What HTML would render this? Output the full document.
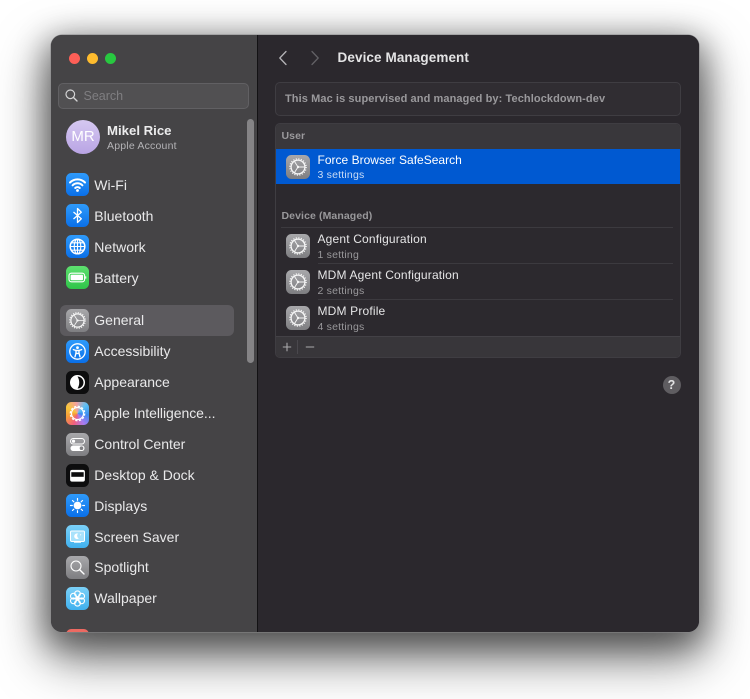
<!DOCTYPE html>
<html><head><meta charset="utf-8">
<style>
html,body{margin:0;padding:0;background:#fff;}
body{width:750px;height:699px;position:relative;overflow:hidden;font-family:"Liberation Sans",sans-serif;-webkit-font-smoothing:antialiased;}
#win{position:absolute;left:51px;top:35px;width:648px;height:597px;border-radius:11px;overflow:hidden;background:#2b282d;box-shadow:0 0 0 .5px #8a8a8c, 0 22px 50px 4px rgba(0,0,0,.55), 0 8px 30px 6px rgba(0,0,0,.35);}
#side{position:absolute;left:0;top:0;width:205.5px;height:597px;background:#454446;border-right:1px solid #131214;}
#main{position:absolute;left:206.5px;top:0;width:441.5px;height:597px;background:#2b282d;}
.a{position:absolute;white-space:nowrap;}
.dot{position:absolute;top:18px;width:11px;height:11px;border-radius:50%;}
.ic{position:absolute;left:15px;width:23px;height:23px;border-radius:5.5px;overflow:hidden;}
.ic svg{display:block;width:23px;height:23px;}
.lb{position:absolute;left:43.3px;font-size:14px;line-height:18px;color:#e9e9ea;white-space:nowrap;}
.blue{background:linear-gradient(#2f9bfb,#0a6fe8);}
.gray{background:linear-gradient(#a8a8ab,#7e7e81);}
.black{background:#0d0d0e;}
.sky{background:linear-gradient(#7bd0f7,#3fb0ee);}
.row-ic{position:absolute;left:10px;width:24px;height:24px;border-radius:5.5px;background:linear-gradient(#a8a8ab,#7e7e81);overflow:hidden;}
.t1{position:absolute;left:41.5px;font-size:12px;line-height:15px;color:#e6e6e7;letter-spacing:.17px;white-space:nowrap;}
.t2{position:absolute;left:41.5px;font-size:10.5px;line-height:13px;color:#99989b;letter-spacing:.2px;white-space:nowrap;}
.sep{position:absolute;left:41.5px;right:7px;height:1px;background:#3c3a3f;}
</style></head><body>
<svg width="0" height="0" style="position:absolute">
<symbol id="gear" viewBox="0 0 24 24">
<circle cx="12" cy="12" r="6.9" fill="none" stroke="#f6f6f6" stroke-width="1.3"/>
<circle cx="12" cy="12" r="8.2" fill="none" stroke="#f6f6f6" stroke-width="1.2" stroke-dasharray="1.1 1.48"/>
<path d="M8.6 6.6L12 12M8.6 17.4L12 12M18.4 12H12" stroke="#f6f6f6" stroke-width=".9" fill="none"/>
<circle cx="12" cy="12" r="1.2" fill="#f6f6f6"/>
</symbol>
</svg>
<div id="win">
 <div id="side">
  <div class="dot" style="left:18px;background:#fe5f57"></div>
  <div class="dot" style="left:36px;background:#febc2e"></div>
  <div class="dot" style="left:54px;background:#28c840"></div>

  <div class="a" style="left:7px;top:48px;width:189px;height:24px;border-radius:5px;background:#515052;border:.5px solid #616063;"></div>
  <svg class="a" style="left:14px;top:54px" width="13" height="13" viewBox="0 0 13 13"><circle cx="5.3" cy="5.3" r="4.3" fill="none" stroke="#d5d5d6" stroke-width="1.2"/><path d="M8.5 8.5L12 12" stroke="#d5d5d6" stroke-width="1.4" stroke-linecap="round"/></svg>
  <div class="a" style="left:32.5px;top:54px;font-size:12.5px;line-height:15px;color:#7f7e81;">Search</div>

  <div class="a" style="left:15px;top:85px;width:34px;height:34px;border-radius:50%;background:linear-gradient(#d5c8f1,#b9a4e4);color:#fff;font-size:15px;line-height:34px;text-align:center;">MR</div>
  <div class="a" style="left:56px;top:87px;font-size:13.2px;line-height:17px;font-weight:bold;color:#ececed">Mikel Rice</div>
  <div class="a" style="left:56px;top:105px;font-size:10.5px;line-height:13px;color:#b4b3b6;letter-spacing:.2px">Apple Account</div>

  <div class="a" style="left:196px;top:84px;width:7px;height:244px;border-radius:4px;background:#858486;"></div>

  <div class="a" style="left:9px;top:270px;width:174px;height:31px;border-radius:6px;background:#5c5a5e;"></div>

  <div class="ic blue" style="top:138px"><svg viewBox="0 0 23 23"><path d="M4 9.5C8.2 5.3 14.8 5.3 19 9.5M6.6 12.3C9.4 9.6 13.6 9.6 16.4 12.3M9.2 15C10.5 13.8 12.5 13.8 13.8 15" fill="none" stroke="#fff" stroke-width="2" stroke-linecap="round"/><circle cx="11.5" cy="17.5" r="1.4" fill="#fff"/></svg></div>
  <div class="lb" style="top:141px">Wi-Fi</div>

  <div class="ic blue" style="top:169px"><svg viewBox="0 0 23 23"><path d="M7.5 8L15.3 14.8L11.5 18.5V4.5L15.3 8.2L7.5 15" fill="none" stroke="#fff" stroke-width="1.3" stroke-linejoin="round"/></svg></div>
  <div class="lb" style="top:172px">Bluetooth</div>

  <div class="ic blue" style="top:200px"><svg viewBox="0 0 23 23"><g fill="none" stroke="#fff" stroke-width="1.1"><circle cx="11.5" cy="11.5" r="7.3" stroke-width="1.5"/><ellipse cx="11.5" cy="11.5" rx="3.3" ry="7.3"/><path d="M11.5 4.2V18.8M4.2 11.5H18.8M5.5 7.8H17.5M5.5 15.2H17.5"/></g></svg></div>
  <div class="lb" style="top:203px">Network</div>

  <div class="ic" style="top:231px;background:linear-gradient(#5ee06f,#2fc549)"><svg viewBox="0 0 23 23"><rect x="3" y="7.2" width="15.6" height="8.6" rx="2.4" fill="none" stroke="#fff" stroke-width="1.1"/><rect x="4.6" y="8.8" width="12.4" height="5.4" rx="1" fill="#fff"/><rect x="19.2" y="10.2" width="1.1" height="2.6" rx=".5" fill="#fff"/></svg></div>
  <div class="lb" style="top:234px">Battery</div>

  <div class="ic gray" style="top:273.5px"><svg viewBox="0 0 24 24"><use href="#gear"/></svg></div>
  <div class="lb" style="top:276px">General</div>

  <div class="ic blue" style="top:304.5px"><svg viewBox="0 0 23 23"><circle cx="11.5" cy="11.5" r="7.7" fill="none" stroke="#fff" stroke-width="1.3"/><circle cx="11.5" cy="7.6" r="1.4" fill="#fff"/><path d="M7.4 9.6L10 10.5V13L9 16.8M15.6 9.6L13 10.5V13L14 16.8M10 10.5H13M10.3 13.4H12.7" fill="none" stroke="#fff" stroke-width="1.4" stroke-linecap="round" stroke-linejoin="round"/></svg></div>
  <div class="lb" style="top:307px">Accessibility</div>

  <div class="ic black" style="top:335.5px"><svg viewBox="0 0 23 23"><circle cx="11.5" cy="11.5" r="7.5" fill="#fff"/><path d="M11.5 5.5A6 6 0 0 1 11.5 17.5C13.8 14 13.8 9 11.5 5.5Z" fill="#0d0d0e"/></svg></div>
  <div class="lb" style="top:338px">Appearance</div>

  <div class="ic" style="top:366.5px;background:conic-gradient(from 200deg,#f0607e,#f59a3a,#f7c63c,#f5a0a0,#5cc0f5,#3a8cf0,#a87cf0,#f0607e)"><svg viewBox="0 0 23 23"><circle cx="11.5" cy="11.5" r="6" fill="none" stroke="#fff" stroke-width="1.2"/><circle cx="11.5" cy="11.5" r="7.2" fill="none" stroke="#fff" stroke-width="1.3" stroke-dasharray="2.2 1.57"/></svg></div>
  <div class="lb" style="top:369px;letter-spacing:-.05px">Apple Intelligence...</div>

  <div class="ic gray" style="top:397.5px"><svg viewBox="0 0 23 23"><rect x="4.5" y="5.5" width="14" height="5.5" rx="2.75" fill="none" stroke="#fff" stroke-width="1"/><circle cx="7.5" cy="8.2" r="1.6" fill="#fff"/><rect x="4.5" y="12.5" width="14" height="5.5" rx="2.75" fill="#fff"/><circle cx="15.5" cy="15.2" r="1.8" fill="#828285"/></svg></div>
  <div class="lb" style="top:400px">Control Center</div>

  <div class="ic black" style="top:428.5px"><svg viewBox="0 0 23 23"><rect x="4.7" y="6.5" width="13.6" height="10.5" rx="1.4" fill="none" stroke="#fff" stroke-width="1.2"/><rect x="4.7" y="12.8" width="13.6" height="4.2" fill="#fff"/><rect x="4.7" y="6.5" width="13.6" height="1.7" fill="#fff"/></svg></div>
  <div class="lb" style="top:431px">Desktop &amp; Dock</div>

  <div class="ic blue" style="top:459px"><svg viewBox="0 0 23 23"><circle cx="11.5" cy="11.5" r="3.9" fill="#fff"/><path d="M11.5 4.5V6.3M11.5 16.7V18.5M4.5 11.5H6.3M16.7 11.5H18.5M6.5 6.5L7.8 7.8M15.2 15.2L16.5 16.5M6.5 16.5L7.8 15.2M15.2 7.8L16.5 6.5" stroke="#fff" stroke-width="1.2" stroke-linecap="round"/></svg></div>
  <div class="lb" style="top:462px">Displays</div>

  <div class="ic sky" style="top:490px"><svg viewBox="0 0 23 23"><rect x="4.5" y="6" width="14" height="10.5" rx="1.2" fill="#a9e2fb" stroke="#fff" stroke-width="1"/><rect x="8" y="16.5" width="7" height="1.2" fill="#fff"/><path d="M12 8.6A2.8 2.8 0 1 0 12.8 13.4A3 3 0 0 1 12 8.6Z" fill="#fff"/><circle cx="14.6" cy="9.8" r=".6" fill="#fff"/></svg></div>
  <div class="lb" style="top:492.5px">Screen Saver</div>

  <div class="ic gray" style="top:520.5px"><svg viewBox="0 0 23 23"><circle cx="10" cy="10" r="5" fill="none" stroke="#fff" stroke-width="1.1"/><path d="M13.7 13.7L18 18" stroke="#fff" stroke-width="1.4" stroke-linecap="round"/></svg></div>
  <div class="lb" style="top:523px">Spotlight</div>

  <div class="ic sky" style="top:551.5px"><svg viewBox="0 0 23 23"><g fill="none" stroke="#fff" stroke-width="1.1"><circle cx="11.5" cy="6.8" r="2.9"/><circle cx="11.5" cy="16.2" r="2.9"/><circle cx="7.4" cy="9.2" r="2.9"/><circle cx="15.6" cy="9.2" r="2.9"/><circle cx="7.4" cy="13.8" r="2.9"/><circle cx="15.6" cy="13.8" r="2.9"/></g><circle cx="11.5" cy="11.5" r="1.6" fill="#fff"/></svg></div>
  <div class="lb" style="top:554px">Wallpaper</div>

  <div class="ic" style="top:593.5px;background:#ec6a62"></div>
 </div>

 <div id="main">
  <svg class="a" style="left:20.5px;top:15px" width="10" height="16" viewBox="0 0 10 16"><path d="M8 1.5L1.8 8L8 14.5" fill="none" stroke="#b5b4b7" stroke-width="1.3" stroke-linecap="round" stroke-linejoin="round"/></svg>
  <svg class="a" style="left:52.5px;top:15px" width="10" height="16" viewBox="0 0 10 16"><path d="M2 1.5L8.2 8L2 14.5" fill="none" stroke="#626165" stroke-width="1.3" stroke-linecap="round" stroke-linejoin="round"/></svg>
  <div class="a" style="left:80px;top:14px;font-size:13.5px;line-height:17px;font-weight:bold;color:#e4e4e5;letter-spacing:.1px">Device Management</div>

  <div class="a" style="left:17.5px;top:46.5px;width:404px;height:32px;border-radius:5px;background:#302d32;border:1px solid #3f3d42;"></div>
  <div class="a" style="left:27.5px;top:56.5px;font-size:11px;line-height:14px;font-weight:bold;color:#9a999c;letter-spacing:.09px">This Mac is supervised and managed by: Techlockdown-dev</div>

  <div class="a" style="left:17.5px;top:88px;width:404px;height:233px;border-radius:5px;background:#2c292e;border:1px solid #3f3d42;overflow:hidden;">
   <div class="a" style="left:0;top:0;width:404px;height:25px;background:#39373b;"></div>
   <div class="a" style="left:5.5px;top:6px;font-size:10.5px;line-height:13px;font-weight:bold;color:#9a999c;letter-spacing:.1px">User</div>
   <div class="a" style="left:0;top:25px;width:404px;height:35px;background:#0059d1;">
    <div class="row-ic" style="top:5.5px"><svg width="24" height="24" viewBox="0 0 24 24"><use href="#gear"/></svg></div>
    <div class="t1" style="top:3.5px;color:#fff;letter-spacing:.01px">Force Browser SafeSearch</div>
    <div class="t2" style="top:19.5px;color:#c9dcf5">3 settings</div>
   </div>
   <div class="a" style="left:5.5px;top:85.5px;font-size:10.5px;line-height:13px;font-weight:bold;color:#99989b;letter-spacing:.1px">Device (Managed)</div>
   <div class="sep" style="top:103px;left:5px"></div>
   <div class="row-ic" style="top:110px"><svg width="24" height="24" viewBox="0 0 24 24"><use href="#gear"/></svg></div>
   <div class="t1" style="top:108px">Agent Configuration</div>
   <div class="t2" style="top:124.5px">1 setting</div>
   <div class="sep" style="top:139px"></div>
   <div class="row-ic" style="top:146px"><svg width="24" height="24" viewBox="0 0 24 24"><use href="#gear"/></svg></div>
   <div class="t1" style="top:144px">MDM Agent Configuration</div>
   <div class="t2" style="top:160.5px">2 settings</div>
   <div class="sep" style="top:175px"></div>
   <div class="row-ic" style="top:182px"><svg width="24" height="24" viewBox="0 0 24 24"><use href="#gear"/></svg></div>
   <div class="t1" style="top:180px">MDM Profile</div>
   <div class="t2" style="top:196.5px">4 settings</div>
   <div class="a" style="left:0;top:212px;width:404px;height:21px;background:#38363a;border-top:1px solid #434146;"></div>
   <svg class="a" style="left:6px;top:218px" width="10" height="10" viewBox="0 0 10 10"><path d="M5 .8V9.2M.8 5H9.2" stroke="#aaa9ac" stroke-width="1.1"/></svg>
   <div class="a" style="left:21px;top:216px;width:1px;height:14px;background:#4a484d;"></div>
   <svg class="a" style="left:28.5px;top:218px" width="10" height="10" viewBox="0 0 10 10"><path d="M.8 5H9.2" stroke="#aaa9ac" stroke-width="1.1"/></svg>
  </div>

  <div class="a" style="left:405px;top:341px;width:18px;height:18px;border-radius:50%;background:#5f5d61;color:#e2e2e3;font-size:12.5px;font-weight:bold;line-height:18px;text-align:center;">?</div>
 </div>
</div>
</body></html>
